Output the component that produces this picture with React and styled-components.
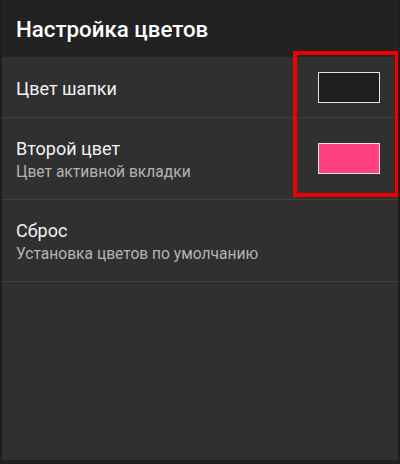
import React from "react"
import styled, { createGlobalStyle } from "styled-components"

const GlobalStyle = createGlobalStyle`
  html, body {
    margin: 0;
    padding: 0;
    background: #1c1c1c;
  }
  * {
    box-sizing: border-box;
  }
`

const Screen = styled.div`
  position: relative;
  width: 400px;
  height: 464px;
  background: #303030;
  border: 2px solid #1e1e1e;
  border-top: 0;
  border-bottom-width: 4px;
  font-family: Roboto, "Noto Sans", sans-serif;
  overflow: hidden;
`

const Toolbar = styled.header`
  height: 57px;
  background: #222222;
  display: flex;
  align-items: center;
  padding: 1px 14px 0;
`

const Title = styled.h1`
  margin: 0;
  font-size: 22.3px;
  font-weight: 500;
  color: #ffffff;
`

const Row = styled.div`
  height: ${(p) => p.$height}px;
  display: flex;
  align-items: center;
  justify-content: space-between;
  padding: 3px 18px 0 14px;
  border-bottom: 1px solid #414141;
`

const Texts = styled.div`
  display: flex;
  flex-direction: column;
`

const Label = styled.div`
  font-size: 18px;
  line-height: 22px;
  color: #f2f2f2;
`

const Hint = styled.div`
  font-size: 15.6px;
  line-height: 22px;
  margin-top: 1px;
  color: #b4b4b4;
`

const Swatch = styled.div`
  width: 62px;
  height: 31px;
  margin-top: -3px;
  background: ${(p) => p.$color};
  border: 1.5px solid #e4e4e4;
`

// red annotation frame drawn over the list
const Highlight = styled.div`
  position: absolute;
  left: 291px;
  top: 51px;
  width: 106px;
  height: 146px;
  border: 4.5px solid #f00000;
  pointer-events: none;
`

const rows = [
  { label: "Цвет шапки", height: 61, color: "#1e1e1e" },
  { label: "Второй цвет", hint: "Цвет активной вкладки", height: 82, color: "#ff4081" },
  { label: "Сброс", hint: "Установка цветов по умолчанию", height: 82 },
]

export default function App() {
  return (
    <>
      <GlobalStyle />
      <Screen>
        <Toolbar>
          <Title>Настройка цветов</Title>
        </Toolbar>
        {rows.map((r) => (
          <Row key={r.label} $height={r.height}>
            <Texts>
              <Label>{r.label}</Label>
              {r.hint && <Hint>{r.hint}</Hint>}
            </Texts>
            {r.color && <Swatch $color={r.color} />}
          </Row>
        ))}
        <Highlight />
      </Screen>
    </>
  )
}
